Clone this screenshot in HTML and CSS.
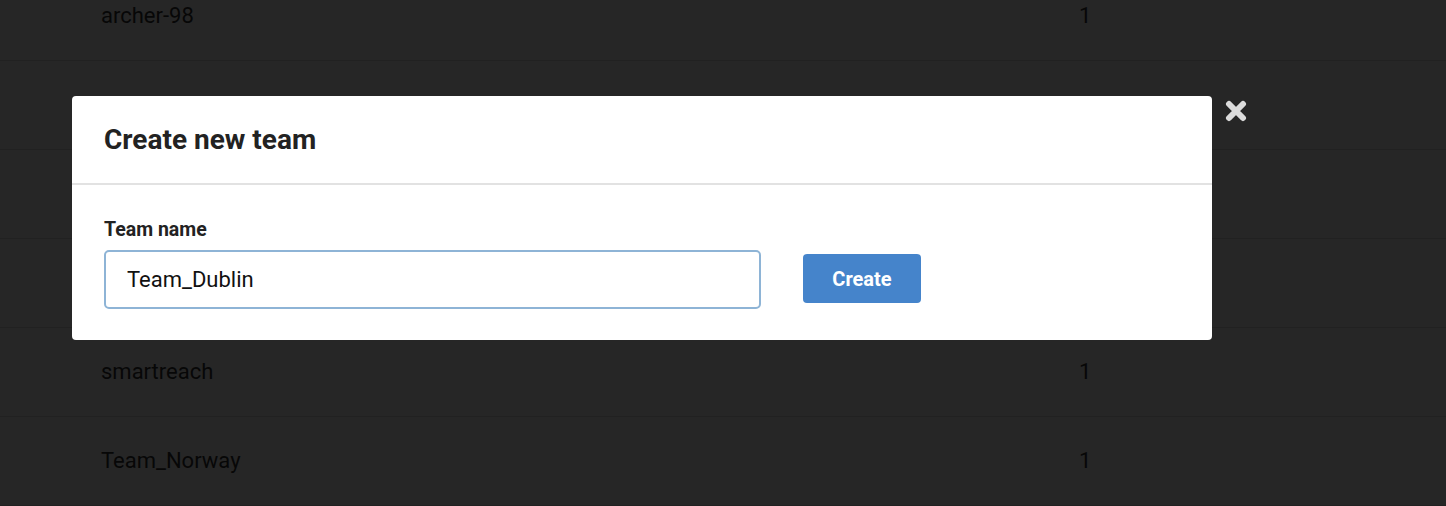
FILE: index.html
```html
<!DOCTYPE html>
<html lang="en">
<head>
  <meta charset="UTF-8" />
  <title>Teams</title>
  <meta name="viewport" content="width=device-width, initial-scale=1" />
  <link rel="stylesheet" href="styles.css">
</head>
<body>

<div class="team-list">
  <div class="team-row"><span class="team-name">archer-98</span><span class="team-count">1</span></div>
  <div class="team-row"><span class="team-name">rebel_kid</span><span class="team-count">1</span></div>
  <div class="team-row"><span class="team-name">nightowl</span><span class="team-count">2</span></div>
  <div class="team-row"><span class="team-name">pixelfox</span><span class="team-count">1</span></div>
  <div class="team-row"><span class="team-name">smartreach</span><span class="team-count">1</span></div>
  <div class="team-row"><span class="team-name">Team_Norway</span><span class="team-count">1</span></div>
</div>

<div class="modal-backdrop">
  <div class="modal">
    <button class="modal-close" title="Close">
      <svg width="22" height="22" viewBox="0 0 22 22">
        <path d="M4 4 L18 18 M18 4 L4 18" stroke="currentColor" stroke-width="6" stroke-linecap="round" />
      </svg>
    </button>
    <div class="modal-header">
      <h2>Create new team</h2>
    </div>
    <form class="modal-body" id="teamForm">
      <label for="teamName">Team name</label>
      <div class="form-row">
        <input type="text" id="teamName" name="teamName" value="Team_Dublin" autocomplete="off" />
        <button type="submit" class="create-btn">Create</button>
      </div>
    </form>
  </div>
</div>

</body>
</html>
```

FILE: styles.css
```css
body {
  margin: 0;
  font-family: Roboto, 'Liberation Sans', sans-serif;
  background: white;
  overflow: hidden;
}
.team-list {
  margin-top: -28px;
}
.team-row {
  display: flex;
  align-items: center;
  height: 86px;
  padding-bottom: 2px;
  border-bottom: 1px solid #ddd;
  padding-left: 101px;
  font-size: 22px;
  color: #333;
}
.team-name {
  width: 978px;
}
.modal-backdrop {
  position: fixed;
  inset: 0;
  background: rgba(0,0,0,0.85);
}
.modal {
  position: absolute;
  left: 72px;
  top: 96px;
  width: 1140px;
  background: white;
  border-radius: 4px;
}
.modal-close {
  position: absolute;
  right: -35px;
  top: 4px;
  background: none;
  border: none;
  padding: 0;
  color: #dcdcdc;
  cursor: pointer;
  display: flex;
}
.modal-header {
  padding: 0 32px;
  height: 87px;
  display: flex;
  align-items: center;
  border-bottom: 2px solid #e2e2e2;
}
h2 {
  margin: 0;
  font-size: 28px;
  font-weight: 700;
  color: #222;
}
.modal-body {
  padding: 33px 32px 31px;
}
label {
  display: block;
  font-size: 19.5px;
  font-weight: 700;
  line-height: 24px;
  color: #222;
  margin-bottom: 8px;
}
.form-row {
  display: flex;
  align-items: center;
  gap: 42px;
}
input[type="text"] {
  width: 657px;
  height: 59px;
  box-sizing: border-box;
  padding: 0 21px;
  font-family: inherit;
  font-size: 22px;
  color: #111;
  border: 2px solid #8eb4d6;
  border-radius: 5px;
  outline: none;
}
.create-btn {
  width: 118px;
  height: 49px;
  background-color: #4584cb;
  border: none;
  border-radius: 4px;
  color: white;
  font-family: inherit;
  font-size: 20px;
  font-weight: 700;
  cursor: pointer;
  margin-top: -2px;
}
```
